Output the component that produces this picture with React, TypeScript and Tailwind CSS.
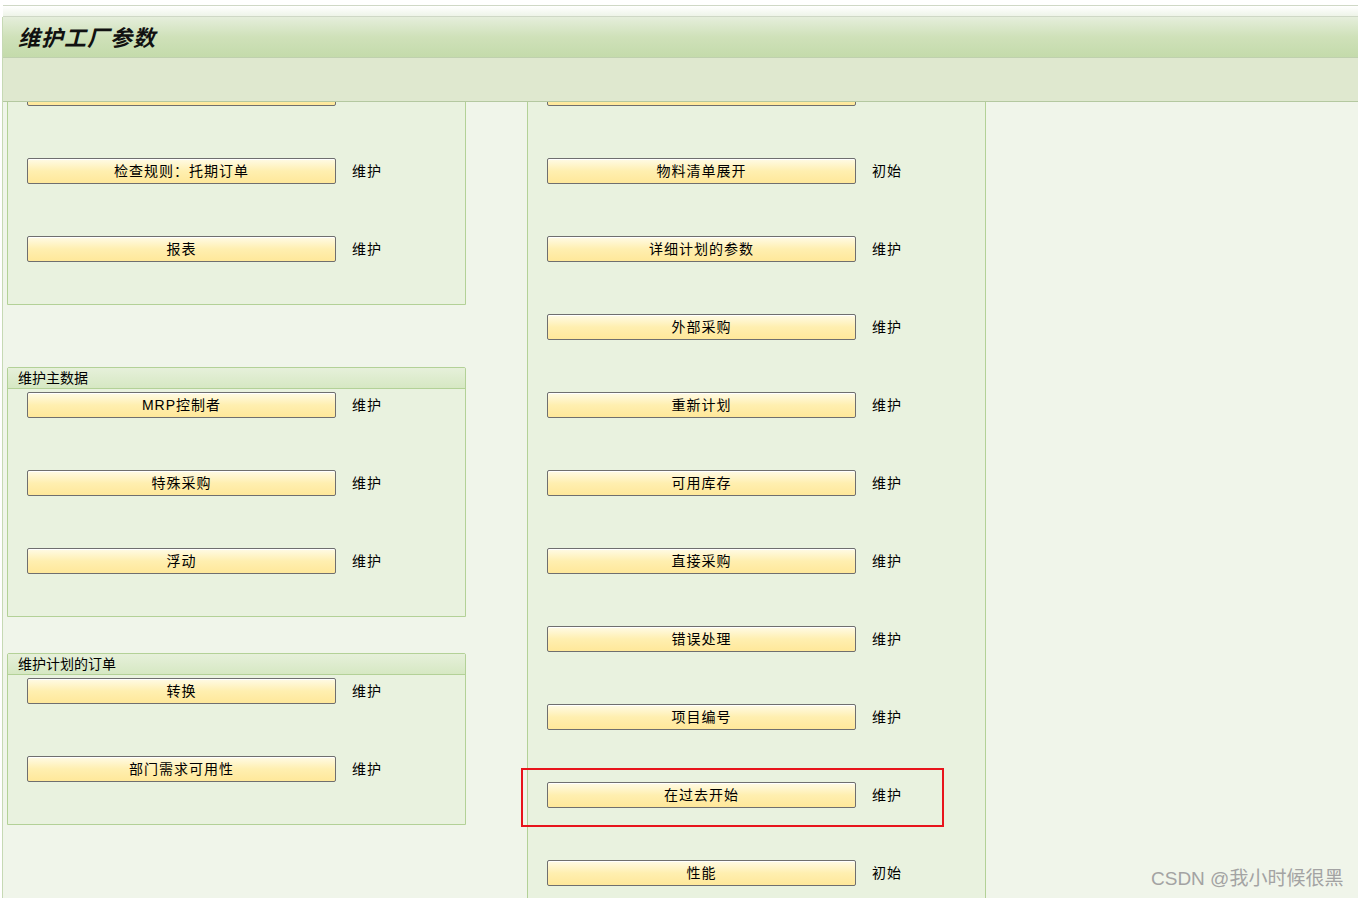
const font = "font-['Liberation_Sans','Noto_Sans_CJK_SC',sans-serif]";

type Item = { name: string; action: string };

function SapButton({ name, action }: Item) {
  return (
    <div className="flex items-center">
      <div
        className={`w-[309px] h-[26px] flex items-center justify-center rounded-[2px] border border-[#6f6f6f] bg-gradient-to-b from-[#fffbe6] via-[#ffefb0] to-[#ffe89a] shadow-[inset_0_1px_0_#ffffff] text-[14px] tracking-[1px] text-black ${font}`}
      >
        {name}
      </div>
      <span className={`ml-[16px] text-[14px] tracking-[1px] text-black ${font}`}>{action}</span>
    </div>
  );
}

function Group({ title, items, className }: { title?: string; items: Item[]; className?: string }) {
  return (
    <div className={`w-[459px] border border-[#b3d197] bg-[#e9f2df] rounded-t-[2px] ${className ?? ""}`}>
      {title && (
        <div
          className={`h-[21px] border-b border-[#b3d197] bg-gradient-to-b from-[#e6f0da] to-[#d6e8c3] pl-[10px] text-[14px] leading-[20px] text-black ${font}`}
        >
          {title}
        </div>
      )}
      <div className="flex flex-col gap-[52px] pl-[19px] pt-[3px] pb-[42px]">
        {items.map((it, i) => (
          <SapButton key={i} {...it} />
        ))}
      </div>
    </div>
  );
}

const middle: Item[] = [
  { name: "计划文件", action: "维护" },
  { name: "物料清单展开", action: "初始" },
  { name: "详细计划的参数", action: "维护" },
  { name: "外部采购", action: "维护" },
  { name: "重新计划", action: "维护" },
  { name: "可用库存", action: "维护" },
  { name: "直接采购", action: "维护" },
  { name: "错误处理", action: "维护" },
  { name: "项目编号", action: "维护" },
  { name: "在过去开始", action: "维护" },
  { name: "性能", action: "初始" },
];

export default function App() {
  return (
    <div className="relative w-[1358px] h-[898px] overflow-hidden bg-white">
      {/* window top strip */}
      <div className="h-[5px] bg-white" />
      <div className="h-[12px] border-t border-b border-[#cfd8c6] bg-gradient-to-b from-[#ffffff] to-[#eef4e8] ml-[3px]" />

      <div className="ml-[2px] border-l border-[#c6d9b4] flex flex-col h-[881px]">
        {/* title bar */}
        <div className="h-[41px] border-b border-[#bfd0ae] bg-gradient-to-b from-[#e5eedb] via-[#cfe1b9] to-[#c4dbab] flex items-center pl-[15px] pb-[2px]">
          <span className="text-[22px] font-bold italic text-[#111] font-['Noto_Sans_CJK_SC',sans-serif] tracking-[1px]">
            维护工厂参数
          </span>
        </div>
        {/* toolbar */}
        <div className="h-[44px] border-b border-[#b4c8a0] bg-[#dfe8cf]" />

        {/* content */}
        <div className="flex-1 overflow-hidden bg-[#f0f5ea] flex">
          <div className="w-[464px] pl-[4px] flex flex-col">
            <Group
              className="-mt-[32px] pt-[6px]"
              items={[
                { name: "计划运行", action: "维护" },
                { name: "检查规则：托期订单", action: "维护" },
                { name: "报表", action: "维护" },
              ]}
            />
            <Group
              className="mt-[62px]"
              title="维护主数据"
              items={[
                { name: "MRP控制者", action: "维护" },
                { name: "特殊采购", action: "维护" },
                { name: "浮动", action: "维护" },
              ]}
            />
            <Group
              className="mt-[36px]"
              title="维护计划的订单"
              items={[
                { name: "转换", action: "维护" },
                { name: "部门需求可用性", action: "维护" },
              ]}
            />
          </div>

          <div className="ml-[60px] w-[459px] border-x border-[#b3d197] bg-[#e9f2df]">
            <div className="-mt-[22px] flex flex-col gap-[52px] pl-[19px]">
              {middle.map((it, i) => (
                <SapButton key={i} {...it} />
              ))}
            </div>
          </div>
        </div>
      </div>

      {/* annotation */}
      <div className="absolute left-[521px] top-[768px] w-[423px] h-[59px] border-2 border-[#e8141c]" />
      <div className="absolute left-[1151px] top-[865px] text-[19px] text-[#a3a3a3] font-['Liberation_Sans','Noto_Sans_CJK_SC',sans-serif]">
        CSDN @我小时候很黑
      </div>
    </div>
  );
}
